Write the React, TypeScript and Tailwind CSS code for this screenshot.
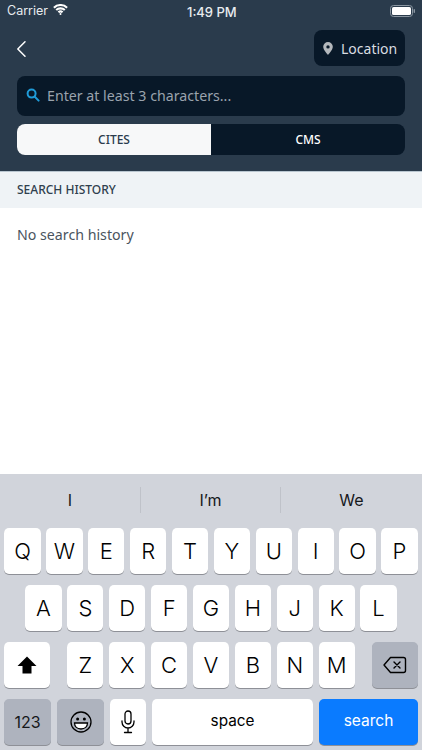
import React from "react";

const Key = ({ label }: { label: string }) => (
  <div className="flex h-[46px] w-[36.2px] items-center justify-center rounded-[5px] bg-white text-[22px] font-light leading-none text-black shadow-[0_1px_0_#8e9097]">
    {label}
  </div>
);

const Row = ({ keys }: { keys: string[] }) => (
  <div className="flex justify-center gap-[5.7px]">
    {keys.map((k) => (
      <Key key={k} label={k} />
    ))}
  </div>
);

export default function App() {
  return (
    <div className="flex h-[750px] w-[422px] flex-col overflow-hidden bg-white font-['Noto_Sans',sans-serif]">
      <header className="flex h-[172px] shrink-0 flex-col border-b border-[#b9c6d0] bg-[#2a3b4c]">
        <div className="relative flex h-[21px] items-center justify-between pl-[7px] pr-[6px] pt-[1px] font-['Inter',sans-serif] text-[12.5px] text-[#e8ecef]">
          <div className="flex items-center gap-[5px]">
            <span>Carrier</span>
            <svg width="15" height="11" viewBox="0 0 15 11" fill="none" stroke="#fff" strokeWidth="2.1" className="-mt-[3px]">
              <path d="M.9 3.7a9.5 9.5 0 0 1 13.2 0" />
              <path d="M3.2 6.1a6.2 6.2 0 0 1 8.6 0" />
              <path d="M5.4 8.3a3 3 0 0 1 4.2 0" />
              <circle cx="7.5" cy="10" r="1" fill="#fff" stroke="none" />
            </svg>
          </div>
          <span className="absolute left-[187px] top-[3px] text-[13px] font-medium">1:49 PM</span>
          <svg width="26" height="12" viewBox="0 0 26 12">
            <rect x="0.5" y="0.5" width="22" height="11" rx="3" fill="none" stroke="#8a96a1" />
            <rect x="2" y="2" width="19" height="8" rx="1.6" fill="#fff" />
            <rect x="23.6" y="4" width="1.4" height="4" rx="0.7" fill="#8a96a1" />
          </svg>
        </div>
        <div className="mt-[9px] flex items-center justify-between pl-[16px] pr-[17px]">
          <svg width="12" height="18" viewBox="0 0 12 18" fill="none" stroke="#fff" strokeWidth="1.5" strokeLinecap="round" strokeLinejoin="round" className="mt-[1px]">
            <path d="M9 1.8 1.8 9 9 16.2" />
          </svg>
          <div className="flex h-[36px] w-[91px] items-center rounded-[8px] bg-[#081828] pl-[9px] text-[14px] text-[#d9dde1]">
            <svg width="10" height="13" viewBox="0 0 10 13" className="mr-[8px]">
              <path fillRule="evenodd" fill="#b4b8bc" d="M5 0a4.8 4.8 0 0 1 4.8 4.8C9.8 8 5 13 5 13S.2 8 .2 4.8A4.8 4.8 0 0 1 5 0Zm0 3.2a1.7 1.7 0 1 0 0 3.4 1.7 1.7 0 0 0 0-3.4Z" />
            </svg>
            Location
          </div>
        </div>
        <div className="mx-[17px] mt-[10px] flex h-[40px] items-center rounded-[8px] bg-[#081828] pl-[9px] text-[14.2px] text-[#9aa3ad]">
          <svg width="14" height="14" viewBox="0 0 14 14" fill="none" stroke="#1f9bd8" strokeWidth="2" strokeLinecap="round" className="mr-[7px] -mt-[2px]">
            <circle cx="5.6" cy="5.6" r="4" />
            <path d="m8.8 8.8 3.8 3.8" />
          </svg>
          Enter at least 3 characters...
        </div>
        <div className="mx-[17px] mt-[8px] flex h-[31px] overflow-hidden rounded-[8px] bg-[#081828] text-[12px] font-medium">
          <div className="flex w-[194px] items-center justify-center bg-[#f7f8f9] text-[#2a3b4c]">CITES</div>
          <div className="flex flex-1 items-center justify-center text-white">CMS</div>
        </div>
      </header>

      <div className="flex h-[36px] shrink-0 items-center bg-[#eff3f6] pl-[17px] text-[12px] font-medium text-[#2f3f4e]">SEARCH HISTORY</div>
      <div className="flex-1 bg-white pl-[17px] pt-[17px] text-[14.2px] leading-[19px] text-[#4a545e]">No search history</div>

      <div className="flex h-[276px] shrink-0 flex-col bg-[#d1d4db] font-['Inter',sans-serif]">
        <div className="flex h-[54px] items-center pb-[2px] text-[16px] text-[#16181b]">
          <div className="flex h-[26px] w-[141px] items-center justify-center border-r border-[#bfc2c9]">I</div>
          <div className="flex h-[26px] w-[140px] items-center justify-center border-r border-[#bfc2c9]">I’m</div>
          <div className="flex flex-1 items-center justify-center">We</div>
        </div>
        <div className="flex flex-col gap-[11px]">
          <Row keys={["Q", "W", "E", "R", "T", "Y", "U", "I", "O", "P"]} />
          <Row keys={["A", "S", "D", "F", "G", "H", "J", "K", "L"]} />
          <div className="flex items-center justify-between px-[4px]">
            <div className="flex h-[46px] w-[46px] items-center justify-center rounded-[5px] bg-white shadow-[0_1px_0_#8e9097]">
              <svg width="20" height="18" viewBox="0 0 20 18"><path d="M10 .5 19.5 10H14.5v7.5h-9V10H.5Z" fill="#000" /></svg>
            </div>
            <div className="flex gap-[5.7px]">
              {["Z", "X", "C", "V", "B", "N", "M"].map((k) => (
                <Key key={k} label={k} />
              ))}
            </div>
            <div className="flex h-[46px] w-[46px] items-center justify-center rounded-[5px] bg-[#aeb3be] shadow-[0_1px_0_#8e9097]">
              <svg width="24" height="18" viewBox="0 0 24 18" fill="none" stroke="#000" strokeWidth="1.4" strokeLinejoin="round" strokeLinecap="round">
                <path d="M7.5 1.5h13a2 2 0 0 1 2 2v11a2 2 0 0 1-2 2h-13L1 9Z" />
                <path d="m11 6 6 6M17 6l-6 6" />
              </svg>
            </div>
          </div>
          <div className="flex items-center gap-[6px] px-[4px]">
            <div className="flex h-[46px] w-[47px] items-center justify-center rounded-[5px] bg-[#aeb3be] text-[16px] text-[#16181b] shadow-[0_1px_0_#8e9097]">123</div>
            <div className="flex h-[46px] w-[47px] items-center justify-center rounded-[5px] bg-[#aeb3be] shadow-[0_1px_0_#8e9097]">
              <svg width="22" height="22" viewBox="0 0 22 22" fill="none" stroke="#000" strokeWidth="1.3">
                <circle cx="11" cy="11" r="10" />
                <circle cx="7.6" cy="8" r="1.5" fill="#000" stroke="none" />
                <circle cx="14.4" cy="8" r="1.5" fill="#000" stroke="none" />
                <path d="M4.5 12h13c0 3.6-2.8 6-6.5 6s-6.5-2.4-6.5-6Z" fill="#fff" />
              </svg>
            </div>
            <div className="flex h-[46px] w-[36px] items-center justify-center rounded-[5px] bg-white shadow-[0_1px_0_#8e9097]">
              <svg width="14" height="24" viewBox="0 0 14 24" fill="none" stroke="#000" strokeWidth="1.3" strokeLinecap="round">
                <rect x="4" y="1" width="6" height="13" rx="3" />
                <path d="M1 11v1a6 6 0 0 0 12 0v-1M7 18v4M3.5 22.5h7" />
              </svg>
            </div>
            <div className="flex h-[46px] w-[161px] items-center justify-center rounded-[5px] bg-white pb-[2px] text-[15.3px] text-black shadow-[0_1px_0_#8e9097]">space</div>
            <div className="flex h-[46px] flex-1 items-center justify-center rounded-[5px] bg-[#0a7bff] pb-[2px] text-[15.5px] text-white shadow-[0_1px_0_#8e9097]">search</div>
          </div>
        </div>
      </div>
    </div>
  );
}
